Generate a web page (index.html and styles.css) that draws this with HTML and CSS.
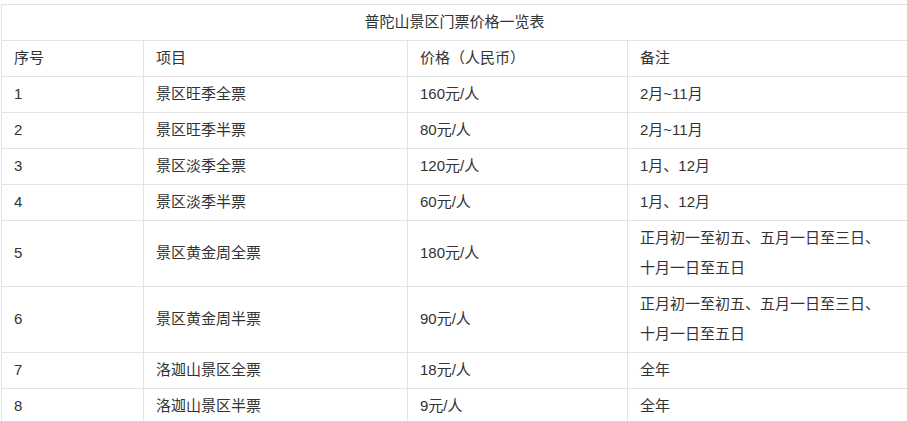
FILE: index.html
```html
<!DOCTYPE html>
<html lang="zh-CN">
<head>
<meta charset="utf-8">
<title>普陀山景区门票价格一览表</title>
<link rel="stylesheet" href="styles.css">
</head>
<body>
<div class="wrap">
<table class="price-table">
  <colgroup>
    <col class="c1"><col class="c2"><col class="c3"><col class="c4">
  </colgroup>
  <tr><td class="title" colspan="4">普陀山景区门票价格一览表</td></tr>
  <tr><td>序号</td><td>项目</td><td>价格（人民币）</td><td>备注</td></tr>
  <tr><td>1</td><td>景区旺季全票</td><td>160元/人</td><td>2月~11月</td></tr>
  <tr><td>2</td><td>景区旺季半票</td><td>80元/人</td><td>2月~11月</td></tr>
  <tr><td>3</td><td>景区淡季全票</td><td>120元/人</td><td>1月、12月</td></tr>
  <tr><td>4</td><td>景区淡季半票</td><td>60元/人</td><td>1月、12月</td></tr>
  <tr><td>5</td><td>景区黄金周全票</td><td>180元/人</td><td>正月初一至初五、五月一日至三日、<br>十月一日至五日</td></tr>
  <tr><td>6</td><td>景区黄金周半票</td><td>90元/人</td><td>正月初一至初五、五月一日至三日、<br>十月一日至五日</td></tr>
  <tr><td>7</td><td>洛迦山景区全票</td><td>18元/人</td><td>全年</td></tr>
  <tr><td>8</td><td>洛迦山景区半票</td><td>9元/人</td><td>全年</td></tr>
</table>
</div>
</body>
</html>
```
FILE: styles.css
```css
html, body {
  margin: 0;
  padding: 0;
  background: #fff;
}
.wrap {
  padding: 4px 0 0 1px;
}
.price-table {
  border-collapse: collapse;
  table-layout: fixed;
  width: 906px;
  font-family: "Liberation Sans", "Noto Sans CJK SC", sans-serif;
  font-size: 15px;
  color: #333;
}
.c1 { width: 142px; }
.c2 { width: 264px; }
.c3 { width: 220px; }
.c4 { width: 280px; }
.price-table td {
  border: 1px solid #e3e3e3;
  padding: 2px 12px 3px 12px;
  line-height: 30px;
  vertical-align: middle;
  text-align: left;
}
.price-table td.title {
  text-align: center;
}
```
